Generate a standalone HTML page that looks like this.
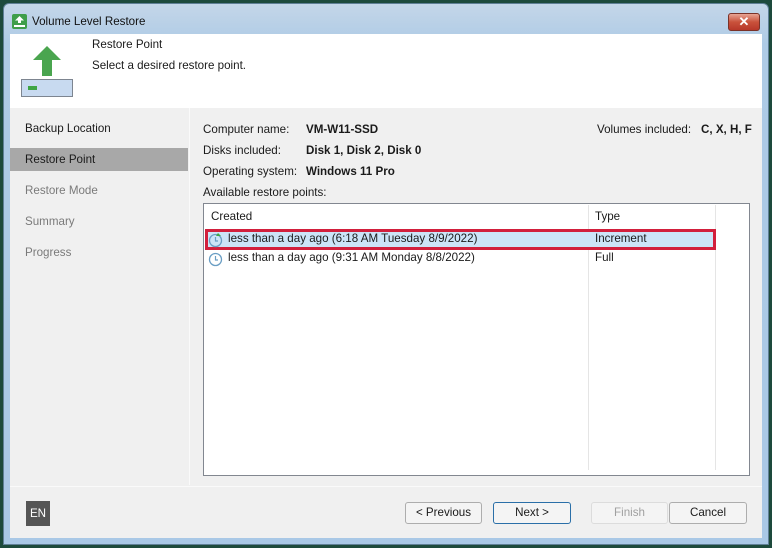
<!DOCTYPE html>
<html><head><meta charset="utf-8"><style>
*{margin:0;padding:0;box-sizing:border-box}
body{width:772px;height:548px;overflow:hidden;background:#1d4a3c;font-family:"Liberation Sans",sans-serif;font-size:11.6px;color:#1a1a1a;position:relative}
.abs{position:absolute}
.frame{left:3px;top:3px;width:766px;height:542px;background:linear-gradient(#c4d6e8,#aecbe6 40px,#a9c8e6);border-radius:6px 6px 0 0;border:1px solid #5f7f96}
.t{white-space:nowrap}
.btn{position:absolute;top:502px;height:22px;border:1px solid #adadad;background:#f4f4f4;border-radius:3px;text-align:center;line-height:20px;font-size:11.6px}
</style></head><body>
<div class="abs frame"></div>
<div class="abs" style="left:12px;top:14px;width:15px;height:15px;background:#3f9e4a;border-radius:2px"></div>
<svg class="abs" style="left:12px;top:14px" width="15" height="15"><path d="M7.5 2 L12 6.5 H9 V9 H6 V6.5 H3 Z" fill="#fff"/><rect x="2" y="11" width="11" height="2" fill="#fff"/></svg>
<div class="abs t" style="left:32px;top:15px;color:#111">Volume Level Restore</div>
<div class="abs" style="left:728px;top:13px;width:32px;height:18px;border-radius:3px;border:1px solid #7a3228;background:linear-gradient(#e8a493,#c9523b 50%,#b7382a);color:#fff;text-align:center;font-weight:bold;font-size:13px;line-height:16px">✕</div>
<div class="abs" style="left:10px;top:34px;width:752px;height:504px;background:#f0f0f0"></div>
<div class="abs" style="left:10px;top:34px;width:752px;height:74px;background:#fff"></div>
<svg class="abs" style="left:28px;top:44px" width="40" height="34"><path d="M19 2 L33 16 H24 V32 H14 V16 H5 Z" fill="#4aa54f"/></svg>
<div class="abs" style="left:21px;top:79px;width:52px;height:18px;background:#c8daf0;border:1px solid #7d8590"></div>
<div class="abs" style="left:28px;top:86px;width:9px;height:4px;background:#3fa544"></div>
<div class="abs t" style="left:92px;top:38px">Restore Point</div>
<div class="abs t" style="left:92px;top:59px">Select a desired restore point.</div>
<div class="abs" style="left:189px;top:108px;width:1px;height:377px;background:#fafafa"></div>
<div class="abs" style="left:10px;top:148px;width:178px;height:23px;background:#a8a8a8"></div>
<div class="abs t" style="left:25px;top:122px">Backup Location</div>
<div class="abs t" style="left:25px;top:153px">Restore Point</div>
<div class="abs t" style="left:25px;top:184px;color:#7a7a7a">Restore Mode</div>
<div class="abs t" style="left:25px;top:215px;color:#7a7a7a">Summary</div>
<div class="abs t" style="left:25px;top:246px;color:#7a7a7a">Progress</div>
<div class="abs t" style="left:203px;top:123px">Computer name:</div>
<div class="abs t" style="left:306px;top:123px;font-weight:bold">VM-W11-SSD</div>
<div class="abs t" style="left:203px;top:144px">Disks included:</div>
<div class="abs t" style="left:306px;top:144px;font-weight:bold">Disk 1, Disk 2, Disk 0</div>
<div class="abs t" style="left:203px;top:165px">Operating system:</div>
<div class="abs t" style="left:306px;top:165px;font-weight:bold">Windows 11 Pro</div>
<div class="abs t" style="left:203px;top:186px">Available restore points:</div>
<div class="abs t" style="left:597px;top:123px">Volumes included:</div>
<div class="abs t" style="left:701px;top:123px;font-weight:bold">C, X, H, F</div>
<div class="abs" style="left:203px;top:203px;width:547px;height:273px;background:#fff;border:1px solid #828790"></div>
<div class="abs" style="left:588px;top:205px;width:1px;height:265px;background:#e5e5e5"></div>
<div class="abs" style="left:715px;top:205px;width:1px;height:265px;background:#e5e5e5"></div>
<div class="abs t" style="left:211px;top:210px">Created</div>
<div class="abs t" style="left:595px;top:210px">Type</div>
<div class="abs" style="left:205px;top:229px;width:511px;height:21px;background:#cce4f7;border:3px solid #d21f3c"></div>
<svg class="abs" style="left:208px;top:232px" width="16" height="16"><circle cx="7.5" cy="8.5" r="6" fill="none" stroke="#6a9ec4" stroke-width="1.3"/><path d="M7.5 5 V9 H10" fill="none" stroke="#6a9ec4" stroke-width="1.2"/><path d="M10 1 L13 4 H8 Z" fill="#3fa544"/></svg>
<div class="abs t" style="left:228px;top:232px">less than a day ago (6:18 AM Tuesday 8/9/2022)</div>
<div class="abs t" style="left:595px;top:232px">Increment</div>
<svg class="abs" style="left:208px;top:251px" width="16" height="16"><circle cx="7.5" cy="8.5" r="6" fill="none" stroke="#6a9ec4" stroke-width="1.3"/><path d="M7.5 5 V9 H10" fill="none" stroke="#6a9ec4" stroke-width="1.2"/></svg>
<div class="abs t" style="left:228px;top:251px">less than a day ago (9:31 AM Monday 8/8/2022)</div>
<div class="abs t" style="left:595px;top:251px">Full</div>
<div class="abs" style="left:10px;top:486px;width:752px;height:1px;background:#fafafa"></div>
<div class="abs" style="left:26px;top:501px;width:24px;height:25px;background:#555;color:#fff;text-align:center;line-height:25px">EN</div>
<div class="btn" style="left:405px;width:77px">&lt; Previous</div>
<div class="btn" style="left:493px;width:78px;border-color:#2a6fa8">Next &gt;</div>
<div class="btn" style="left:591px;width:77px;color:#a0a0a0;border-color:#dcdcdc">Finish</div>
<div class="btn" style="left:669px;width:78px">Cancel</div>
</body></html>
